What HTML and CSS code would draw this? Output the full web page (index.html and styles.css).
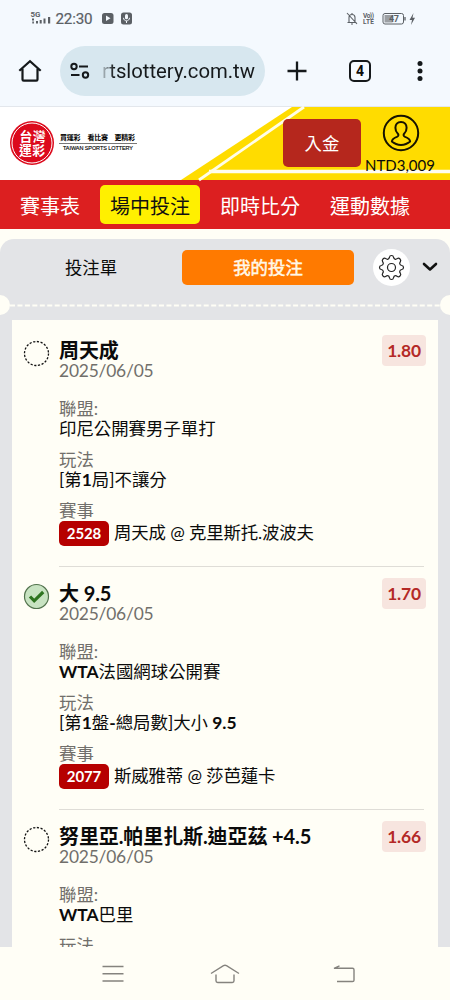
FILE: index.html
```html
<!DOCTYPE html>
<html lang="zh-Hant">
<head>
<meta charset="utf-8">
<title>台灣運彩</title>
<link rel="stylesheet" href="styles.css">
</head>
<body>
<div class="phone">
  <header class="status">
    <svg class="status-left" width="120" height="20" viewBox="0 0 120 20" fill="#5b6065">
      <text class="roboto bold" x="0.5" y="8" font-size="8" textLength="10" lengthAdjust="spacingAndGlyphs">5G</text>
      <rect x="2" y="9.500" width="2" height="2"/><rect x="2.300" y="12.500" width="1.600" height="2"/>
      <rect x="6" y="12" width="2" height="2.500"/><rect x="9.700" y="11" width="2" height="3.500"/><rect x="13.500" y="9.500" width="2" height="5"/><rect x="18" y="8" width="2.200" height="6.500"/>
      <text class="roboto" x="25.500" y="15.300" font-size="15.200" textLength="37" stroke="#5b6065" stroke-width=".2">22:30</text>
      <rect x="72" y="4" width="11.500" height="11" rx="2.500"/><path d="M76 6.600v5.400l4.500-2.700z" fill="#f4f9fe"/>
      <rect x="91" y="3.500" width="11" height="12" rx="2.500"/><rect x="95" y="5" width="3" height="5.200" rx="1.500" fill="#f4f9fe"/><path d="M93.500 8.800c0 4 6 4 6 0M96.500 12v2" fill="none" stroke="#f4f9fe"/>
    </svg>
    <svg class="status-right" width="72" height="20" viewBox="0 0 72 20" fill="#5b6065">
      <path d="M1.500 13.500h9M3 13V8.500c0-4 6-4 6 0V13M1 4l10 11M5 15h2M6 4v1.200" fill="none" stroke="#5b6065" stroke-width="1.100"/>
      <text class="roboto bold" x="17" y="9" font-size="6.500" textLength="11">Vo))</text>
      <text class="roboto bold" x="17" y="15" font-size="6.500" textLength="11">LTE</text>
      <rect x="37" y="4.500" width="20.500" height="10.500" rx="2" fill="none" stroke="#5b6065"/>
      <rect x="38.500" y="6" width="8" height="7.500" fill="#9b9fa3"/><path d="M59 8v3.500" stroke="#5b6065" stroke-width="1.300"/>
      <text class="roboto bold" x="43" y="13" font-size="9" textLength="10">47</text>
      <path d="M67.500 4l-4 7h2.500l-1 5 4-7.200h-2.500z"/>
    </svg>
  </header>

  <div class="browser">
    <svg class="home" width="24" height="24" viewBox="0 0 24 24" fill="none" stroke="#15191b" stroke-width="2.200"><path d="M1.300 11.800L12 2.200l10.700 9.600M4.500 9.800v10.600c0 .8.400 1.200 1.200 1.200h12.600c.8 0 1.200-.4 1.200-1.200V9.800"/></svg>
    <div class="url">
      <svg width="20" height="18" viewBox="0 0 20 18" fill="none" stroke="#15191b" stroke-width="2"><circle cx="4" cy="4.500" r="2.700"/><path d="M9 4.500h9M1 13h8.500"/><circle cx="15.500" cy="13" r="2.700"/></svg>
      <span class="address">rtslottery.com.tw</span>
    </div>
    <svg class="plus" width="20" height="20" viewBox="0 0 20 20" stroke="#15191b" stroke-width="2.300"><path d="M10 0.500v19M.5 10h19"/></svg>
    <span class="tab-count">4</span>
    <svg class="dots" width="6" height="20" viewBox="0 0 6 20" fill="#15191b"><circle cx="3" cy="2.600" r="2.500"/><circle cx="3" cy="10" r="2.500"/><circle cx="3" cy="17.500" r="2.500"/></svg>
  </div>

  <div class="banner">
    <svg class="banner-art" width="270" height="72" viewBox="0 0 270 72">
      <path d="M1 72L112-1H270V72z" fill="#ffdc00"/>
      <path d="M29 63.500H270" stroke="#fffdf0" stroke-width="3.500"/>
      <path d="M19 72L124-1" fill="none" stroke="#fffde8" stroke-width="2.800"/>
    </svg>
    <svg class="logo" width="132" height="50" viewBox="0 0 132 50">
      <circle cx="22" cy="25" r="22" fill="#dc0a1c"/><circle cx="22" cy="25" r="20" fill="none" stroke="#fff" stroke-width="1"/>
      <text class="cjk bold" x="9.500" y="22.900" font-size="12.800" textLength="26" fill="#fff">台灣</text>
      <text class="cjk bold" x="9" y="36.600" font-size="12.800" textLength="26" fill="#fff">運彩</text>
      <text class="cjk bold" x="50" y="22.300" font-size="7" textLength="20.500">買運彩</text>
      <text class="cjk bold" x="77.500" y="22.300" font-size="7" textLength="20.500">看比賽</text>
      <text class="cjk bold" x="104.500" y="22.300" font-size="7" textLength="20.500">更精彩</text>
      <path d="M49 25.500h78" stroke="#777" stroke-width="1"/>
      <text class="arial" x="53" y="32.400" font-size="5.500" textLength="70" stroke="#111" stroke-width=".15">TAIWAN SPORTS LOTTERY</text>
    </svg>
    <button class="deposit">入金</button>
    <div class="account">
      <svg width="38" height="38" viewBox="0 0 38 38" fill="none" stroke="#171300" stroke-width="2"><circle cx="19" cy="19" r="17.200"/><path d="M19 8c-3.700 0-5.600 2.600-5.600 5.800 0 2.500.8 4.300 2.300 5.700 1.200 1.200.9 2.700-.8 3.400-3.200 1.200-5 2.300-5 4.700 5 4.500 13.200 4.500 18.200 0 0-2.400-1.800-3.500-5-4.700-1.700-.7-2-2.200-.8-3.400 1.500-1.400 2.300-3.200 2.300-5.700C24.600 10.600 22.700 8 19 8z"/></svg>
      <span class="balance">NTD3,009</span>
    </div>
  </div>

  <nav class="nav">
    <a>賽事表</a><a class="active">場中投注</a><a>即時比分</a><a>運動數據</a>
  </nav>

  <main class="slip">
    <div class="tabs">
      <span class="tab">投注單</span>
      <span class="tab selected">我的投注</span>
      <span class="gear"><svg width="27" height="27" viewBox="0 0 27 27" fill="none" stroke="#222" stroke-width="1.200" stroke-linejoin="round"><circle cx="13.500" cy="13.500" r="4"/><path d="M11.500 3.200Q11.700 1.500 13.500 1.500T15.500 3.200Q15.800 5 17.300 5.300Q18 5.500 19.400 4.600Q20.700 3.700 22 5T22.400 7.600Q21.500 9 21.700 9.700Q22 11.200 23.800 11.500Q25.500 11.700 25.500 13.500T23.800 15.500Q22 15.800 21.700 17.300Q21.500 18 22.400 19.400Q23.300 20.700 22 22T19.400 22.400Q18 21.500 17.300 21.700Q15.800 22 15.500 23.800Q15.300 25.500 13.500 25.500T11.500 23.800Q11.200 22 9.700 21.700Q9 21.500 7.600 22.400Q6.300 23.300 5 22T4.600 19.400Q5.500 18 5.300 17.300Q5 15.800 3.200 15.500Q1.500 15.300 1.500 13.500T3.200 11.500Q5 11.200 5.300 9.700Q5.500 9 4.600 7.600Q3.700 6.300 5 5T7.600 4.600Q9 5.500 9.700 5.300Q11.200 5 11.500 3.200z"/></svg></span>
      <svg class="chevron" width="16" height="10" viewBox="0 0 16 10" fill="none" stroke="#111" stroke-width="2.600" stroke-linecap="round" stroke-linejoin="round"><path d="M2 2l6 5.500L14 2"/></svg>
    </div>
    <div class="perforation">
      <i class="notch"></i>
      <svg width="430" height="3" viewBox="0 0 430 3"><path d="M0 1.500h430" stroke="#fffef6" stroke-width="2.200" stroke-dasharray="5 2.450"/></svg>
      <i class="notch"></i>
    </div>
    <div class="card">
      <article class="bet">
        <svg class="mark" width="27" height="27" viewBox="0 0 27 27"><circle cx="13.500" cy="13.500" r="12" fill="none" stroke="#111" stroke-width="1.300" stroke-dasharray="2.200 1.570"/></svg>
        <div class="detail">
          <h2>周天成</h2><time>2025/06/05</time>
          <dl>
            <dt>聯盟:</dt><dd>印尼公開賽男子單打</dd>
            <dt>玩法</dt><dd>[第<b>1</b>局]不讓分</dd>
            <dt>賽事</dt><dd class="match"><span class="code">2528</span>周天成 @ 克里斯托.波波夫</dd>
          </dl>
        </div>
        <span class="odds">1.80</span>
      </article>
      <article class="bet">
        <svg class="mark" width="27" height="27" viewBox="0 0 27 27"><circle cx="13.500" cy="13.500" r="12" fill="#c8e3c2" stroke="#52734d" stroke-width="1.200"/><path d="M7 13.500l4.200 4.300 9-8.800" fill="none" stroke="#2e7420" stroke-width="3.200"/></svg>
        <div class="detail">
          <h2>大 9.5</h2><time>2025/06/05</time>
          <dl>
            <dt>聯盟:</dt><dd><b>WTA</b>法國網球公開賽</dd>
            <dt>玩法</dt><dd>[第<b>1</b>盤<b>-</b>總局數]大小<b> 9.5</b></dd>
            <dt>賽事</dt><dd class="match"><span class="code">2077</span>斯威雅蒂 @ 莎芭蓮卡</dd>
          </dl>
        </div>
        <span class="odds">1.70</span>
      </article>
      <article class="bet">
        <svg class="mark" width="27" height="27" viewBox="0 0 27 27"><circle cx="13.500" cy="13.500" r="12" fill="none" stroke="#111" stroke-width="1.300" stroke-dasharray="2.200 1.570"/></svg>
        <div class="detail">
          <h2>努里亞.帕里扎斯.迪亞茲 +4.5</h2><time>2025/06/05</time>
          <dl>
            <dt>聯盟:</dt><dd><b>WTA</b>巴里</dd>
            <dt>玩法</dt>
          </dl>
        </div>
        <span class="odds">1.66</span>
      </article>
    </div>
  </main>

  <footer class="keys">
    <svg width="22" height="18" viewBox="0 0 22 18" stroke="#85837e" stroke-width="1.400"><path d="M.5 1.500h21M.5 8.700h21M.5 16h21"/></svg>
    <svg class="key-home" width="30" height="20" viewBox="0 0 30 20" fill="none" stroke="#85837e" stroke-width="1.400"><path d="M1 9.500L13.500 1.700q1.500-.8 3 0L29 9.500M6 10.500v6.300q0 1.700 1.700 1.700h14.600q1.700 0 1.700-1.700v-6.300"/></svg>
    <svg width="22" height="18" viewBox="0 0 22 18" fill="none" stroke="#85837e" stroke-width="1.400"><path d="M6.500 .8L1 3.300H19.500q1.500 0 1.500 1.500v10.400q0 1.300-1.500 1.300H4"/></svg>
  </footer>
</div>
</body>
</html>
```
FILE: styles.css
```css
* { box-sizing: border-box; }
body { margin: 0; }
.phone {
  width: 450px; height: 1000px; overflow: hidden;
  display: flex; flex-direction: column;
  background: #fffef6; color: #0b0b0b;
  font-family: Lato, "Noto Sans CJK TC", sans-serif; font-size: 17.4px;
}
svg { display: block; flex: none; }
.roboto { font-family: Roboto, sans-serif; }
.arial { font-family: "Liberation Sans", sans-serif; }
.cjk { font-family: "Noto Sans CJK TC", sans-serif; }
.bold { font-weight: 700; }

.status { height: 36px; flex: none; display: flex; justify-content: space-between; padding: 9px 32px 0 30px; background: #f4f9fe; }

.browser { height: 71px; flex: none; display: flex; align-items: center; padding: 0 27px 0 18px; background: #f4f9fe; border-bottom: 1px solid #e3e7ec; font-family: Roboto, sans-serif; }
.url { width: 205px; height: 50px; margin-left: 18px; padding: 0 10px; border-radius: 25px; background: #d7e7ef; display: flex; align-items: center; }
.address { width: 155px; margin-left: 10px; font-size: 20.3px; color: #15191b; text-align: right; white-space: nowrap; -webkit-mask-image: linear-gradient(90deg, transparent, #000 14px); mask-image: linear-gradient(90deg, transparent, #000 14px); }
.plus { margin-left: 22px; }
.tab-count { width: 22px; height: 22px; margin-left: 42px; border: 2px solid #15191b; border-radius: 5px; font-size: 14px; font-weight: 700; line-height: 18px; text-align: center; }
.dots { margin-left: auto; }

.banner { position: relative; height: 73px; flex: none; display: flex; align-items: flex-start; padding-top: 1px; background: #fff; }
.banner-art { position: absolute; right: 0; bottom: 0; overflow: visible; }
.logo { position: relative; margin: 10px 0 0 10px; }
.deposit { position: relative; width: 78px; height: 48px; margin: 11px 0 0 141px; padding: 1px 0 0; border: 0; border-radius: 5px; background: #b5271d; color: #fff; font: inherit; line-height: 48px; }
.account { position: relative; width: 80px; display: flex; flex-direction: column; align-items: center; padding-top: 6px; }
.balance { margin: 4px 0 0 -2px; font-size: 15px; line-height: 18px; }

.nav { height: 49px; flex: none; display: flex; align-items: center; padding-left: 10px; gap: 10px; background: #dc1f20; color: #fff; font-size: 20px; }
.nav a { height: 39px; padding: 2px 10px 0; line-height: 39px; border-radius: 5px; white-space: nowrap; }
.nav .active { background: #fff000; color: #111; }

.slip { height: 708px; flex: none; margin-top: 10px; padding: 0; background: #e3e4e7; border-radius: 14px 14px 0 0; overflow: hidden; }
.tabs { height: 56px; display: flex; align-items: center; }
.tab { width: 182px; height: 35px; line-height: 36px; text-align: center; }
.selected { width: 172px; border-radius: 5px; background: #ff7a00; color: #fff8e8; -webkit-text-stroke: .5px #fff8e8; }
.gear { width: 37px; height: 37px; margin-left: 19px; border-radius: 50%; background: #fff; display: flex; align-items: center; justify-content: center; }
.chevron { margin-left: 12px; }
.perforation { height: 20px; margin: 0 -10px; display: flex; align-items: center; }
.perforation .notch { width: 20px; height: 20px; flex: none; border-radius: 50%; background: #fffef6; }
.card { height: 640px; margin: 5px 12px 0; padding-top: 4px; background: #fffef6; }

.bet { display: flex; padding: 14px 14px 0 11px; }
.mark { margin-top: 2px; }
.detail { flex: 1; margin-left: 9px; margin-right: -42px; padding-bottom: 20.5px; border-bottom: 1px solid #dfddd7; }
.bet h2 { margin: 0; font-size: 20px; line-height: 24px; letter-spacing: -.1px; font-weight: 700; white-space: nowrap; }
.bet time { display: block; line-height: 18.5px; letter-spacing: -.2px; color: #716f6b; }
.bet dl { margin: 17px 0 0; }
.bet dt { line-height: 21px; color: #716f6b; }
.bet dd { margin: 0 0 9.5px; line-height: 20.5px; white-space: nowrap; }
.bet .match { height: 25px; margin: 0; padding-top: 1px; display: flex; align-items: center; gap: 5px; letter-spacing: -.12px; }
.code { width: 50px; height: 25px; margin-top: -1px; border-radius: 5px; background: #b60000; color: #fff; font-size: 15px; font-weight: 700; line-height: 25px; text-align: center; }
.odds { width: 44px; height: 31px; margin: -3px -2px 0 0; border-radius: 4px; background: #f7e5df; color: #b42926; font-size: 17.4px; font-weight: 700; letter-spacing: -.2px; line-height: 31px; text-align: center; }

.keys { height: 53px; flex: none; display: flex; justify-content: space-between; align-items: center; padding: 0 95px 0 102px; background: #fffef6; }
.key-home { margin-right: 7px; }
```
